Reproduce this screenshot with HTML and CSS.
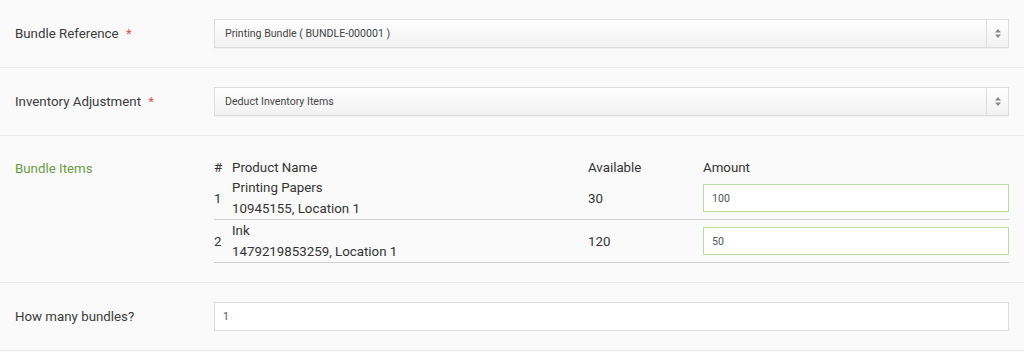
FILE: index.html
```html
<!DOCTYPE html>
<html>
<head>
<meta charset="utf-8" />
<title>Create Bundle</title>
<link rel="stylesheet" href="styles.css">
</head>
<body>
	<form class="bundle-form">
		<div class="form-row">
			<label class="form-label">Bundle Reference <span class="req">*</span></label>
			<div class="form-field">
				<div class="select">
					<span class="select-value">Printing Bundle ( BUNDLE-000001 )</span>
					<span class="select-arrow">
						<svg width="8" height="11" viewBox="0 0 8 11"><path d="M4 1L7 4.5H1z M4 10L7 6.5H1z" fill="#888"/></svg>
					</span>
				</div>
			</div>
		</div>

		<div class="form-row">
			<label class="form-label">Inventory Adjustment <span class="req">*</span></label>
			<div class="form-field">
				<div class="select">
					<span class="select-value">Deduct Inventory Items</span>
					<span class="select-arrow">
						<svg width="8" height="11" viewBox="0 0 8 11"><path d="M4 1L7 4.5H1z M4 10L7 6.5H1z" fill="#888"/></svg>
					</span>
				</div>
			</div>
		</div>

		<div class="form-row form-row-top">
			<label class="form-label label-green">Bundle Items</label>
			<div class="form-field">
				<table class="items">
					<thead>
						<tr>
							<th class="col-num">#</th>
							<th class="col-name">Product Name</th>
							<th class="col-avail">Available</th>
							<th class="col-amount">Amount</th>
						</tr>
					</thead>
					<tbody>
						<tr>
							<td>1</td>
							<td>Printing Papers<br>10945155, Location 1</td>
							<td>30</td>
							<td><input class="input input-ok" type="text" value="100"></td>
						</tr>
						<tr>
							<td>2</td>
							<td>Ink<br>1479219853259, Location 1</td>
							<td>120</td>
							<td><input class="input input-ok" type="text" value="50"></td>
						</tr>
					</tbody>
				</table>
			</div>
		</div>

		<div class="form-row">
			<label class="form-label">How many bundles?</label>
			<div class="form-field">
				<input class="input" type="text" value="1">
			</div>
		</div>
	</form>
</body>
</html>
```

FILE: styles.css
```css
html, body {
	margin: 0;
	padding: 0;
	background: #fafafa;
}

body {
	font-family: Roboto, "Liberation Sans", sans-serif;
	color: #333;
	font-size: 13.3px;
}

.form-row {
	display: flex;
	align-items: center;
	padding: 19px 15px 19px 15px;
	border-bottom: 1px solid #ececec;
	background: #fafafa;
}
.form-row-top {
	align-items: flex-start;
	padding-top: 21px;
	padding-bottom: 19px;
}

.form-label {
	width: 199px;
	flex: none;
	font-size: 13.3px;
	color: #3a3a3a;
}
.form-row-top .form-label {
	padding-top: 4px;
}
.req {
	color: #d9534f;
	margin-left: 4px;
}
.label-green {
	color: #6b9c44;
}

.form-field {
	width: 795px;
}

/* select */
.select {
	display: flex;
	height: 27px;
	border: 1px solid #dcdcdc;
	background: linear-gradient(#ffffff, #f1f1f1);
	box-shadow: 0 1px 0 rgba(0,0,0,.03);
}
.select-value {
	flex: 1;
	display: flex;
	align-items: center;
	padding-left: 10px;
	font-size: 10.6px;
	color: #444;
}
.select-arrow {
	width: 21px;
	display: flex;
	align-items: center;
	justify-content: center;
	border-left: 1px solid #dcdcdc;
}

/* inputs */
.input {
	display: block;
	box-sizing: border-box;
	width: 100%;
	height: 29px;
	margin: 0;
	padding: 0 8px;
	border: 1px solid #dcdcdc;
	background: #fff;
	font-family: Roboto, "Liberation Sans", sans-serif;
	font-size: 10.6px;
	color: #555;
	outline: none;
}
.input-ok {
	height: 28px;
	border-color: #b8dca2;
}

/* bundle items table */
.items {
	width: 100%;
	border-collapse: collapse;
}
.items th {
	text-align: left;
	font-weight: normal;
	color: #333;
	height: 20px;
	padding: 0;
	vertical-align: middle;
}
.items td {
	padding: 0;
	line-height: 21px;
	height: 42px;
	vertical-align: middle;
	border-bottom: 1px solid #cfcfcf;
}
.col-num { width: 18px; }
.col-name { width: 356px; }
.col-avail { width: 115px; }
```
